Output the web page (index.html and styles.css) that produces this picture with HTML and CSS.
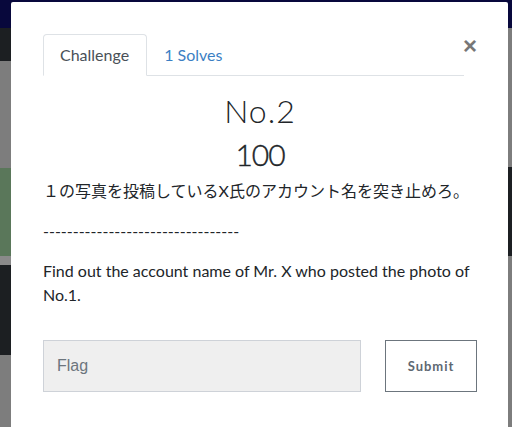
FILE: index.html
```html
<!DOCTYPE html>
<html lang="ja">
<head>
<meta charset="utf-8">
<title>Challenge</title>
<link rel="stylesheet" href="styles.css">
</head>
<body>
<div class="backdrop">
  <div class="navbar"></div>
  <div class="bg-cols">
    <div class="bg-col">
      <div class="blk dark h33"></div>
      <div class="blk gray h107"></div>
      <div class="blk green h88"></div>
      <div class="blk gray h9"></div>
      <div class="blk dark h90"></div>
      <div class="blk gray fill"></div>
    </div>
    <div class="bg-col">
      <div class="blk gray h138"></div>
      <div class="blk dark h89"></div>
      <div class="blk gray fill"></div>
    </div>
  </div>
</div>

<div class="modal">
  <div class="modal-body">
    <button class="close" type="button">&times;</button>
    <ul class="tabs">
      <li class="tab active">Challenge</li>
      <li class="tab link">1 Solves</li>
    </ul>
    <h3 class="title">No.2</h3>
    <h4 class="value">100</h4>
    <p class="desc-jp">１の写真を投稿しているX氏のアカウント名を突き止めろ。</p>
    <p class="dashes">---------------------------------</p>
    <p class="desc-en">Find out the account name of Mr. X who posted the photo of No.1.</p>
    <form class="answer">
      <input class="flag" type="text" placeholder="Flag">
      <button class="submit" type="button">Submit</button>
    </form>
  </div>
</div>
</body>
</html>
```

FILE: styles.css
```css
html, body {
  margin: 0;
  padding: 0;
  height: 100%;
  overflow: hidden;
}
body {
  font-family: "Lato", "Noto Sans CJK JP", sans-serif;
  background: #7d7d7d;
  color: #212529;
}
.backdrop {
  height: 100%;
  display: flex;
  flex-direction: column;
}
.navbar {
  height: 28px;
  background: #08083c;
  flex: none;
}
.bg-cols {
  flex: 1;
  display: flex;
  justify-content: space-between;
}
.bg-col {
  width: 11px;
  display: flex;
  flex-direction: column;
}
.blk { flex: none; }
.dark { background: #1c1f22; }
.gray { background: #7d7d7d; }
.green { background: #5a775a; }
.h33 { height: 33px; }
.h107 { height: 107px; }
.h88 { height: 88px; }
.h9 { height: 9px; background: #8a8a8a; }
.h90 { height: 90px; }
.h138 { height: 139px; }
.h89 { height: 89px; }
.fill { flex: 1; }

.modal {
  position: absolute;
  left: 11px;
  top: 2px;
  width: 497px;
  height: 440px;
  background: #fff;
  border-radius: 2px;
}
.modal-body {
  position: relative;
  padding: 32px 31px 0 32px;
}
.close {
  position: absolute;
  top: 32px;
  right: 31px;
  border: 0;
  background: none;
  padding: 0;
  font-family: "Liberation Sans", sans-serif;
  font-size: 24px;
  font-weight: bold;
  line-height: 1;
  color: #777;
}
.tabs {
  list-style: none;
  margin: 0 13px 0 0;
  padding: 0;
  display: flex;
  border-bottom: 1px solid #dee2e6;
}
.tab {
  padding: 8px 16px;
  font-size: 16px;
  line-height: 24px;
  border: 1px solid transparent;
  border-radius: 4px 4px 0 0;
  margin-bottom: -1px;
}
.tab.active {
  color: #495057;
  border-color: #dee2e6 #dee2e6 #fff;
  background: #fff;
  padding-right: 17px;
}
.tab.link { color: #3b7fc4; }

.title {
  margin: 15px 0 0;
  text-align: center;
  font-weight: 300;
  font-size: 32px;
  line-height: 40px;
  color: #212529;
  letter-spacing: 1px;
}
.value {
  margin: 5px 0 0;
  text-align: center;
  font-weight: 300;
  font-size: 30px;
  line-height: 36px;
  letter-spacing: -1px;
  color: #212529;
  -webkit-text-stroke: 0.4px #212529;
}
.desc-jp {
  margin: 7px 0 0;
  font-size: 16px;
  line-height: 24px;
  color: #212529;
}
.dashes {
  margin: 16px 0 0;
  font-size: 16px;
  line-height: 24px;
}
.desc-en {
  margin: 16px 0 0;
  font-size: 16px;
  line-height: 24px;
}
.answer {
  margin: 33px 0 0;
  display: flex;
  gap: 24px;
}
.flag {
  width: 318px;
  height: 52px;
  box-sizing: border-box;
  border: 1px solid #ced2d8;
  background: #efefef;
  padding: 0 13px;
  font-family: "Liberation Sans", sans-serif;
  font-size: 16px;
  color: #495057;
  border-radius: 0;
}
.flag::placeholder { color: #6c757d; }
.submit {
  width: 92px;
  height: 52px;
  box-sizing: border-box;
  border: 1px solid #6c757d;
  background: #fff;
  color: #5e6872;
  font-family: "Lato", sans-serif;
  font-weight: 700;
  font-size: 13px;
  letter-spacing: 1px;
  border-radius: 0;
  padding: 0;
}
```
